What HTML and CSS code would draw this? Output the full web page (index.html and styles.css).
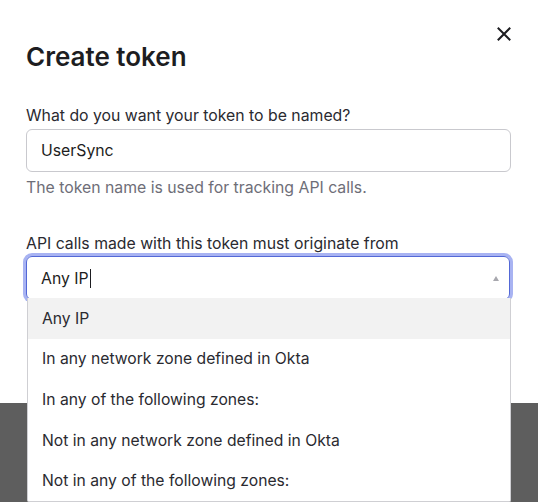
FILE: index.html
```html
<!DOCTYPE html>
<html lang="en">
<head>
<meta charset="utf-8">
<title>Create token</title>
<link rel="stylesheet" href="styles.css">
</head>
<body>
<div class="modal">
  <button class="close" aria-label="Close">
    <svg width="14" height="14" viewBox="0 0 14 14"><path d="M1.5 1.5 L12.5 12.5 M12.5 1.5 L1.5 12.5" stroke="#1d1d21" stroke-width="2" stroke-linecap="square" fill="none"/></svg>
  </button>
  <h1 class="title">Create token</h1>
  <div class="field">
    <label class="label">What do you want your token to be named?</label>
    <div class="input">UserSync</div>
    <p class="hint">The token name is used for tracking API calls.</p>
  </div>
  <div class="field field-select">
    <label class="label">API calls made with this token must originate from</label>
    <div class="select">
      <span class="value">Any IP</span><span class="cursor"></span>
      <span class="caret"></span>
    </div>
    <ul class="menu">
      <li class="option active">Any IP</li>
      <li class="option">In any network zone defined in Okta</li>
      <li class="option">In any of the following zones:</li>
      <li class="option">Not in any network zone defined in Okta</li>
      <li class="option">Not in any of the following zones:</li>
    </ul>
  </div>
</div>
</body>
</html>
```

FILE: styles.css
```css
* { box-sizing: border-box; }
html, body { margin: 0; padding: 0; }
body {
  background: #5e5e5e;
  font-family: Inter, "Noto Sans", sans-serif;
  color: #1d1d21;
  width: 538px;
  height: 502px;
  overflow: hidden;
}
.modal {
  position: relative;
  background: #fff;
  height: 403px;
  padding: 41px 27px 0 26px;
}
.close {
  position: absolute;
  top: 27px;
  right: 27px;
  width: 14px;
  height: 14px;
  padding: 0;
  border: 0;
  background: none;
  display: flex;
}
.title {
  margin: 0;
  font-size: 26px;
  font-weight: 600;
  line-height: 32px;
}
.field { display: flex; flex-direction: column; }
.field:first-of-type { margin-top: 33px; }
.label {
  font-size: 15.8px;
  line-height: 20px;
  color: #2a2a30;
}
.input {
  margin-top: 3px;
  height: 43px;
  border: 1px solid #c9c9ce;
  border-radius: 6px;
  padding: 0 14px;
  display: flex;
  align-items: center;
  font-size: 15.8px;
}
.hint {
  margin: 6px 0 0;
  font-size: 15.8px;
  line-height: 20px;
  color: #6e6e78;
}
.field-select { position: relative; margin-top: 36px; }
.select {
  margin-top: 2px;
  height: 44px;
  margin-right: 1px;
  border: 1px solid #5368d6;
  border-radius: 6px;
  box-shadow: 0 0 0 3px #a8b3f2;
  padding: 0 10px 0 14px;
  display: flex;
  align-items: center;
  font-size: 15.8px;
}
.cursor {
  display: inline-block;
  width: 1px;
  height: 19px;
  background: #1d1d21;
  margin-left: 1px;
}
.caret {
  margin-left: auto;
  width: 0;
  height: 0;
  border-left: 3.5px solid transparent;
  border-right: 3.5px solid transparent;
  border-bottom: 5px solid #a8a8ae;
}
.menu {
  position: absolute;
  top: 64px;
  left: 1px;
  width: 484px;
  margin: 0;
  padding: 0;
  list-style: none;
  background: #fff;
  border: 1px solid #cfcfd3;
  border-top: 0;
  border-radius: 0 0 2px 2px;
}
.option {
  height: 40.6px;
  display: flex;
  align-items: center;
  padding-left: 14px;
  font-size: 15.7px;
  color: #2a2a30;
}
.option.active { background: #f2f2f2; }
```
